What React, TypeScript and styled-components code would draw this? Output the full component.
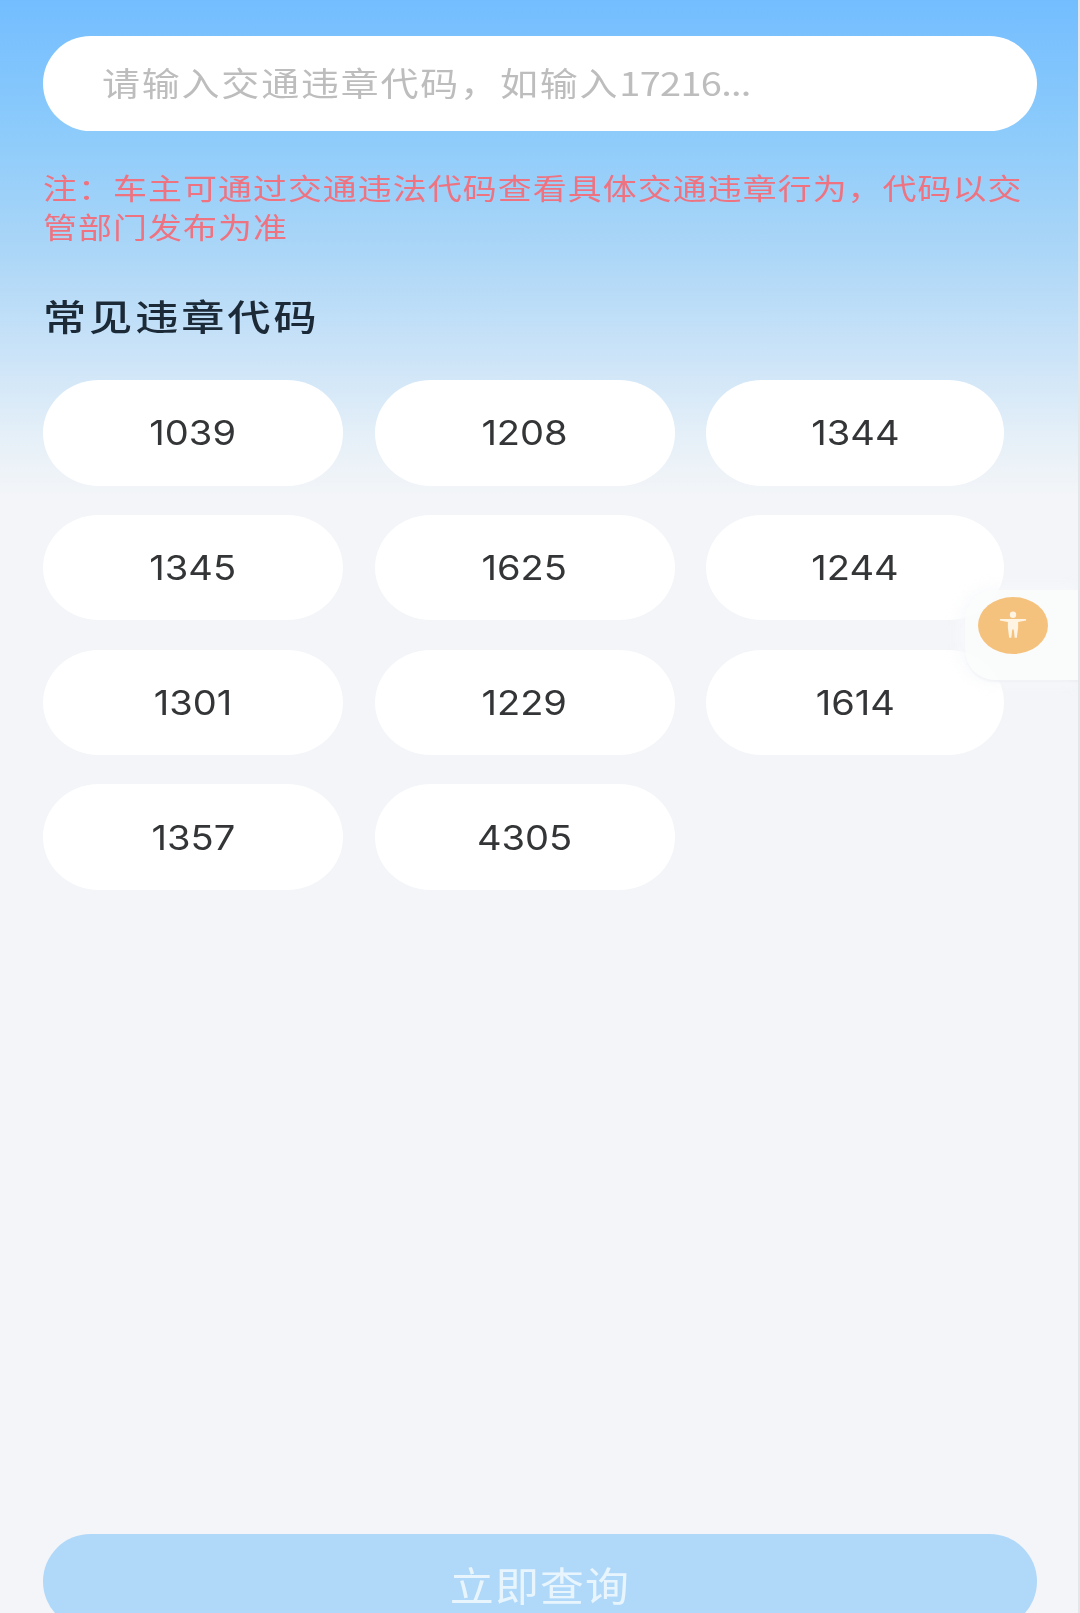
import React from 'react';
import styled, { createGlobalStyle } from 'styled-components';

const Global = createGlobalStyle`
  html, body { margin: 0; padding: 0; background: #f3f5f8; }
  * { box-sizing: border-box; }
`;

const cjk = `"Noto Sans CJK SC", "Noto Sans", sans-serif`;

const Page = styled.div`
  position: relative;
  width: 1080px;
  height: 1613px;
  overflow: hidden;
  display: flex;
  flex-direction: column;
  padding: 36px 43px 0;
  font-family: ${cjk};
  background: linear-gradient(180deg, #73bdff 0px, #8ccbfb 130px, #abd6f7 250px, #c8e2f8 345px, #e6f0f8 440px, #f3f5f8 495px);
  border-right: 2px solid #e4e7ea;
  filter: blur(0.5px);
`;

const SearchBar = styled.div`
  width: 994px;
  height: 95px;
  flex-shrink: 0;
  border-radius: 48px;
  background: #ffffff;
  display: flex;
  align-items: center;
  padding: 0 0 3px 59px;
`;

const Placeholder = styled.span`
  display: inline-block;
  font-size: 33px;
  letter-spacing: 1.6px;
  color: #bdbdbd;
  line-height: 1;
  transform: scaleX(1.15);
  transform-origin: left center;
`;

const PlaceholderDigits = styled.span`
  letter-spacing: -0.6px;
`;

const Note = styled.p`
  margin: 37px 0 0;
  width: 850px;
  font-size: 29px;
  line-height: 38.5px;
  letter-spacing: 0.9px;
  color: #ee7280;
  transform: scaleX(1.17);
  transform-origin: left top;
`;

const SectionTitle = styled.h2`
  margin: 45px 0 0;
  font-size: 36px;
  line-height: 50px;
  font-weight: 500;
  letter-spacing: 2.4px;
  color: #1c2a38;
  transform: scaleX(1.2);
  transform-origin: left center;
`;

const CodeGrid = styled.div`
  margin-top: 40px;
  display: grid;
  grid-template-columns: 300px 300px 298px;
  column-gap: 31.5px;
  row-gap: 29.2px;
`;

const CodePill = styled.div`
  height: 105.6px;
  border-radius: 56px / 50%;
  background: #ffffff;
  display: flex;
  align-items: center;
  justify-content: center;
`;

const CodeLabel = styled.span`
  display: inline-block;
  font-family: Inter, "Noto Sans", sans-serif;
  font-size: 34px;
  color: #333536;
  transform: scaleX(1.12);
`;

const SubmitButton = styled.div`
  margin-top: auto;
  margin-bottom: -16px;
  flex-shrink: 0;
  width: 994px;
  height: 95px;
  border-radius: 48px;
  background: #b0d8f9;
  display: flex;
  align-items: center;
  justify-content: center;
  padding-top: 4px;
`;

const SubmitLabel = styled.span`
  display: inline-block;
  font-size: 40px;
  letter-spacing: 1px;
  color: #e9f5fd;
  transform: scaleX(1.1);
`;

const FloatCard = styled.div`
  position: absolute;
  right: 0;
  top: 590px;
  width: 113px;
  height: 90px;
  border-radius: 30px 0 0 30px;
  background: rgba(250, 251, 252, 0.85);
  box-shadow: -4px 0 14px 3px rgba(248, 249, 251, 0.85), 0 2px 2px rgba(226, 229, 233, 0.7);
  display: flex;
  align-items: center;
  padding: 0 0 20px 13px;
`;

const FloatBadge = styled.div`
  width: 70px;
  height: 57px;
  border-radius: 50%;
  background: #f5c27e;
  display: flex;
  align-items: center;
  justify-content: center;
`;

const PersonIcon = () => (
  <svg width="28" height="28" viewBox="0 0 30 30" fill="#fff3e2">
    <circle cx="15" cy="4" r="3.4" />
    <path d="M1 8.5h28v1.8l-8.5 1.4v6l-1.4 11h-2.3l-1-9h-1.6l-1 9h-2.3l-1.4-11v-6L1 10.3z" />
  </svg>
);

const codes = ['1039', '1208', '1344', '1345', '1625', '1244', '1301', '1229', '1614', '1357', '4305'];

export default function App() {
  return (
    <Page>
      <Global />
      <SearchBar>
        <Placeholder>
          请输入交通违章代码，如输入<PlaceholderDigits>17216...</PlaceholderDigits>
        </Placeholder>
      </SearchBar>
      <Note>注：车主可通过交通违法代码查看具体交通违章行为，代码以交管部门发布为准</Note>
      <SectionTitle>常见违章代码</SectionTitle>
      <CodeGrid>
        {codes.map((code) => (
          <CodePill key={code}>
            <CodeLabel>{code}</CodeLabel>
          </CodePill>
        ))}
      </CodeGrid>
      <SubmitButton>
        <SubmitLabel>立即查询</SubmitLabel>
      </SubmitButton>
      <FloatCard>
        <FloatBadge>
          <PersonIcon />
        </FloatBadge>
      </FloatCard>
    </Page>
  );
}
